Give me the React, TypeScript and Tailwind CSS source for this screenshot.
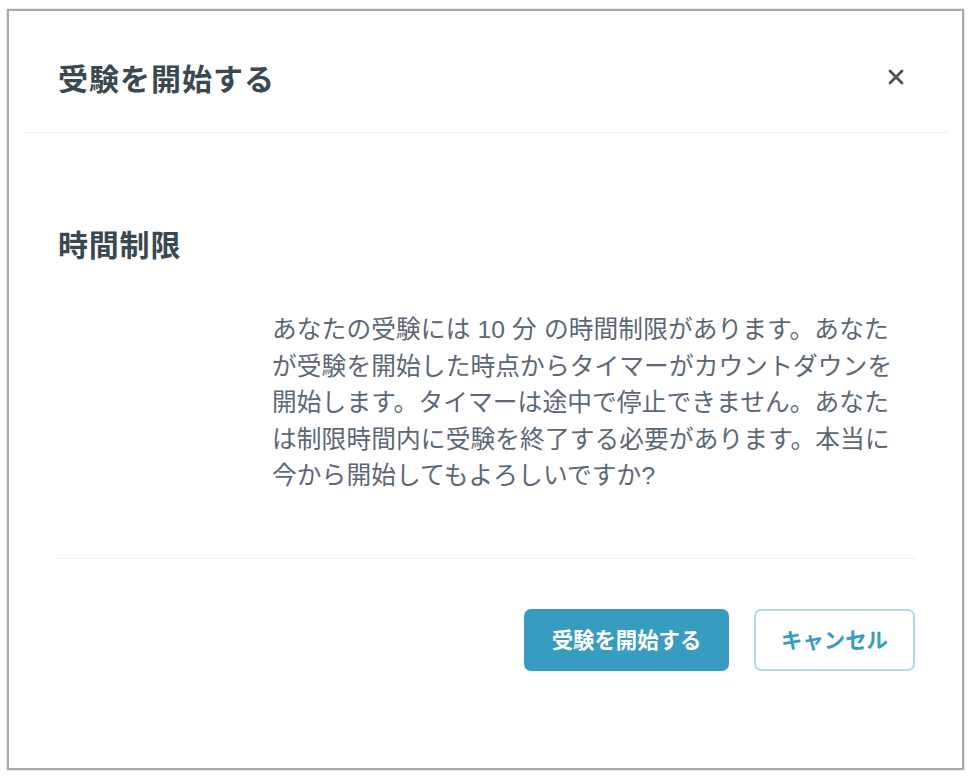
export default function App() {
  const font = { fontFamily: '"Noto Sans CJK JP", "Noto Sans", sans-serif' };
  const bodyFont = { fontFamily: '"Liberation Sans", "Noto Sans CJK JP", sans-serif' };

  return (
    <div className="h-[776px] w-[969px] bg-white pl-[7px] pt-[9px]" style={font}>
      <div className="flex h-[761px] w-[957px] flex-col border-2 border-[#a9a9a9] bg-white shadow-[0_0_2px_rgba(0,0,0,0.25)]">
        {/* ヘッダー */}
        <div className="mx-[15px] flex h-[122px] shrink-0 items-center justify-between border-b border-[#efefef] pl-[34px] pr-[43px] pt-[10px]">
          <h1 className="text-[30px] font-bold leading-[40px] tracking-[1px] text-[#3a4850]">受験を開始する</h1>
          <button className="flex h-[16px] w-[16px] items-center justify-center text-[#505050]">
            <svg viewBox="0 0 16 16" className="h-[16px] w-[16px]" fill="none" stroke="currentColor" strokeWidth="2.8" strokeLinecap="round">
              <path d="M2 2L14 14M14 2L2 14" />
            </svg>
          </button>
        </div>

        {/* 本文 */}
        <div className="pl-[49px] pr-[47px]">
          <h2 className="mt-[90px] text-[30px] font-bold leading-[40px] tracking-[0.8px] text-[#3a4850]">時間制限</h2>
          <p
            className="ml-[214px] mt-[49px] whitespace-nowrap text-[24.7px] leading-[36.5px] tracking-[0.12px] text-[#5c6775]"
            style={bodyFont}
          >
            あなたの受験には 10 分 の時間制限があります。あなた
            <br />
            が受験を開始した時点からタイマーがカウントダウンを
            <br />
            開始します。タイマーは途中で停止できません。あなた
            <br />
            は制限時間内に受験を終了する必要があります。本当に
            <br />
            今から開始してもよろしいですか?
          </p>
          <div className="mt-[63px] border-t border-[#efefef]" />
          <div className="mt-[50px] flex justify-end gap-[25px]">
            <button className="flex h-[62px] w-[205px] items-center justify-center rounded-[7px] bg-[#389bc0] text-[21.4px] font-bold text-white">
              受験を開始する
            </button>
            <button className="flex h-[62px] w-[161px] items-center justify-center rounded-[7px] border-2 border-[#b3dbea] bg-white text-[21.4px] font-bold text-[#389bc0]">
              キャンセル
            </button>
          </div>
        </div>
      </div>
    </div>
  );
}
